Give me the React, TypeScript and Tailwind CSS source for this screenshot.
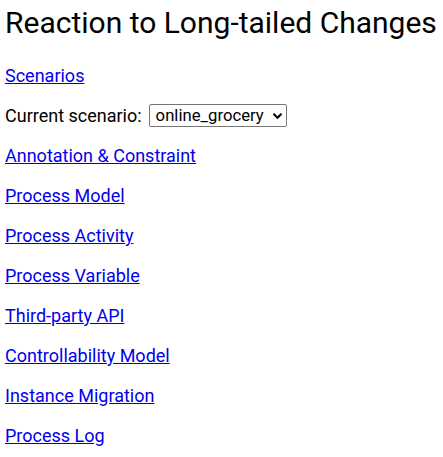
import { useState } from "react";

const links = [
  "Annotation & Constraint",
  "Process Model",
  "Process Activity",
  "Process Variable",
  "Third-party API",
  "Controllability Model",
  "Instance Migration",
  "Process Log",
];

export default function App() {
  const [scenario, setScenario] = useState("online_grocery");

  return (
    <div className="min-h-screen bg-white px-[5px] font-['Roboto',sans-serif] text-[18px] leading-[21px] text-black">
      {/* Title */}
      <h1 className="pt-[5px] text-[30px] leading-[35px] font-normal whitespace-nowrap">
        Reaction to Long-tailed Changes
      </h1>

      <div className="mt-[25px] flex flex-col gap-[19px]">
        <div className="h-[21px]">
          <a href="#" className="text-[#0000ee] underline">
            Scenarios
          </a>
        </div>

        {/* Scenario picker */}
        <div className="flex h-[21px] items-center">
          <label htmlFor="scenario">Current scenario:</label>
          <div className="relative ml-[7px]">
            <select
              id="scenario"
              value={scenario}
              onChange={(e) => setScenario(e.target.value)}
              className="block h-[23px] w-[138px] appearance-none rounded-[2px] border border-[#767676] pl-[6px] pr-[20px] text-[16.7px] leading-[21px]"
            >
              <option value="online_grocery">online_grocery</option>
            </select>
            <svg
              className="pointer-events-none absolute right-[4px] top-[8px]"
              width="11"
              height="8"
              viewBox="0 0 11 8"
            >
              <path d="M1.5 1.8l4 4 4-4" fill="none" stroke="#000" strokeWidth="2" />
            </svg>
          </div>
        </div>

        {/* Page links */}
        {links.map((l) => (
          <div key={l} className="h-[21px]">
            <a href="#" className="text-[#0000ee] underline">
              {l}
            </a>
          </div>
        ))}
      </div>
    </div>
  );
}
